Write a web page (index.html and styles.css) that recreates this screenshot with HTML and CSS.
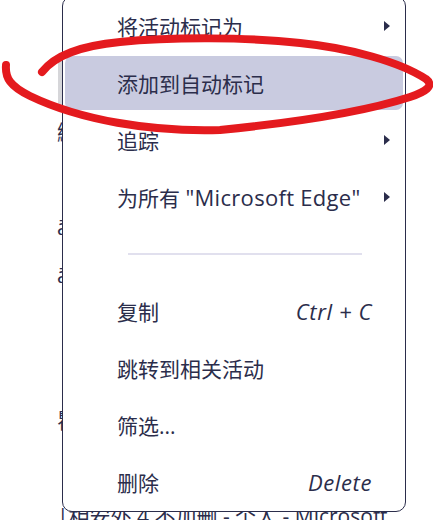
FILE: index.html
```html
<!DOCTYPE html>
<html lang="zh-CN">
<head>
<meta charset="utf-8">
<title>Context menu</title>
<link rel="stylesheet" href="styles.css">
</head>
<body>
<div class="page">
  <div class="bg-list">
    <div class="bg-row"></div>
    <div class="bg-row"><span class="bg-hover"></span></div>
    <div class="bg-row">綁</div>
    <div class="bg-row"></div>
    <div class="bg-row">ā</div>
    <div class="bg-row">ā</div>
    <div class="bg-row"></div>
    <div class="bg-row"></div>
    <div class="bg-row">瞿</div>
    <div class="bg-row">Ⅱ</div>
    <div class="bg-row">|相安外 4 不加删 - 个人 - Microsoft Edge</div>
  </div>

  <div class="menu">
    <div class="item"><span class="label">将活动标记为</span><span class="slot"><span class="arrow"></span></span></div>
    <div class="item item-active"><span class="label">添加到自动标记</span><span class="slot"></span></div>
    <div class="item"><span class="label">追踪</span><span class="slot"><span class="arrow"></span></span></div>
    <div class="item"><span class="label">为所有 <span class="latin">"Microsoft Edge"</span></span><span class="slot"><span class="arrow"></span></span></div>
    <div class="sep"><span class="sep-line"></span></div>
    <div class="item"><span class="label">复制</span><span class="shortcut latin">Ctrl + C</span><span class="slot"></span></div>
    <div class="item"><span class="label">跳转到相关活动</span><span class="slot"></span></div>
    <div class="item"><span class="label">筛选...</span><span class="slot"></span></div>
    <div class="item"><span class="label">删除</span><span class="shortcut latin">Delete</span><span class="slot"></span></div>
  </div>

  <svg class="scribble" width="433" height="520" viewBox="0 0 433 520">
    <path d="M 42 72 C 55 55, 80 46, 120 42 C 170 37, 250 37, 300 43 C 350 48, 400 62, 426 79 C 435 86, 425 92, 410 97 C 370 110, 300 122, 220 130 C 150 132, 80 120, 30 96 C 10 86, 5 78, 6 65" fill="none" stroke="#e41a1e" stroke-width="8" stroke-linecap="round" stroke-linejoin="round"/>
  </svg>
</div>
</body>
</html>
```

FILE: styles.css
```css
* { box-sizing: border-box; }

html, body {
  margin: 0;
  padding: 0;
  background: #ffffff;
}

body {
  font-family: "Open Sans", "Noto Sans CJK SC", sans-serif;
  color: #2b2d4b;
}

.page {
  position: relative;
  width: 433px;
  height: 520px;
  overflow: hidden;
  background: #ffffff;
}

.bg-list {
  display: flex;
  flex-direction: column;
  padding-top: 11px;
  width: 394px;
  overflow: hidden;
}

.bg-row {
  height: 48px;
  display: flex;
  align-items: center;
  padding-left: 57px;
  font-size: 21px;
  white-space: nowrap;
  color: #2b2d4b;
}

.bg-hover {
  align-self: stretch;
  width: 12px;
  margin-left: 1px;
  margin-top: -2px;
  margin-bottom: 2px;
  background: #d6d6d9;
}

.menu {
  position: absolute;
  left: 62px;
  top: -4px;
  width: 344px;
  background: #ffffff;
  border: 1.5px solid #2b2d4b;
  border-radius: 10px;
  padding: 2px 2px;
  display: flex;
  flex-direction: column;
  gap: 3px;
}

.item {
  height: 54px;
  display: flex;
  align-items: center;
  padding-left: 52px;
  padding-right: 13px;
  font-size: 21px;
  border-radius: 7px;
  white-space: nowrap;
}

.item-active {
  background: #c9cbe0;
}

.label {
  flex: 1;
}

.latin {
  font-size: 22px;
  letter-spacing: 0.3px;
}

.shortcut {
  font-style: italic;
  letter-spacing: 0.6px;
}

.slot {
  width: 18px;
  display: flex;
  justify-content: flex-end;
}

.arrow {
  width: 0;
  height: 0;
  border-left: 6px solid #2b2d4b;
  border-top: 5.5px solid transparent;
  border-bottom: 5.5px solid transparent;
}

.sep {
  height: 54px;
  display: flex;
  align-items: center;
  padding-left: 63px;
  padding-right: 41px;
}

.sep-line {
  flex: 1;
  height: 2px;
  background: #e1e0ee;
}

.scribble {
  position: absolute;
  left: 0;
  top: 0;
  pointer-events: none;
}
```
